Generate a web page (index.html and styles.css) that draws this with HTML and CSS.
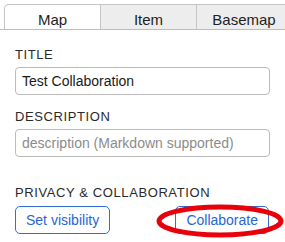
FILE: index.html
```html
<!DOCTYPE html>
<html>
<head>
<meta charset="utf-8">
<link rel="stylesheet" href="styles.css">
</head>
<body>
<div class="tabs">
  <div class="tab active">Map</div>
  <div class="tab">Item</div>
  <div class="tab last">Basemap</div>
</div>
<div class="content">
  <div class="label first">TITLE</div>
  <div class="input">Test Collaboration</div>
  <div class="label">DESCRIPTION</div>
  <div class="input placeholder">description (Markdown supported)</div>
  <div class="label privacy">PRIVACY &amp; COLLABORATION</div>
  <div class="buttons">
    <div class="btn">Set visibility</div>
    <div class="btn collab">Collaborate
      <svg class="circle" width="132" height="40" viewBox="0 0 132 40">
        <ellipse cx="65" cy="19" rx="61" ry="14" fill="none" stroke="#e8000b" stroke-width="5"/>
      </svg>
    </div>
  </div>
</div>
</body>
</html>
```
FILE: styles.css
```css
html, body {
  margin: 0;
  padding: 0;
  background: #fff;
  overflow: hidden;
}
body {
  font-family: "Liberation Sans", Arial, sans-serif;
  color: #222;
  width: 285px;
  height: 242px;
}
.tabs {
  display: flex;
  padding: 4px 0 0 4px;
  border-bottom: 1px solid #bdbdbd;
  overflow: hidden;
}
.tab {
  flex: 0 0 96px;
  box-sizing: border-box;
  border-top: 1px solid #c4c4c4;
  border-left: 1px solid #c4c4c4;
  background: #ededed;
  font-size: 15px;
  line-height: 17px;
  padding: 6px 0 1px;
  text-align: center;
  color: #1e1e1e;
}
.tab.active {
  background: #fff;
  border-top-left-radius: 5px;
  margin-bottom: -1px;
  padding-bottom: 2px;
}
.tab.last {
  border-right: 1px solid #c4c4c4;
}
.content {
  padding: 0 15px;
}
.label {
  font-size: 13px;
  line-height: 15px;
  letter-spacing: 0.6px;
  color: #2a2a2a;
  margin-top: 14px;
}
.label.first {
  margin-top: 17px;
}
.label.privacy {
  margin-top: 28px;
}
.input {
  margin-top: 5px;
  box-sizing: border-box;
  height: 28px;
  border: 1px solid #bcbcbc;
  border-radius: 4px;
  padding: 0 6px;
  font-size: 14px;
  line-height: 26px;
  color: #1a1a1a;
}
.input.placeholder {
  color: #8c8c8c;
}
.buttons {
  margin-top: 6px;
  display: flex;
  justify-content: space-between;
}
.btn {
  position: relative;
  box-sizing: border-box;
  height: 28px;
  border: 1px solid #2f6fd6;
  border-radius: 5px;
  padding: 0 10px;
  font-size: 14px;
  line-height: 26px;
  color: #2767d0;
  background: #fff;
}
.collab {
  margin-right: 1px;
}
.circle {
  position: absolute;
  left: -21px;
  top: -5px;
}
```
